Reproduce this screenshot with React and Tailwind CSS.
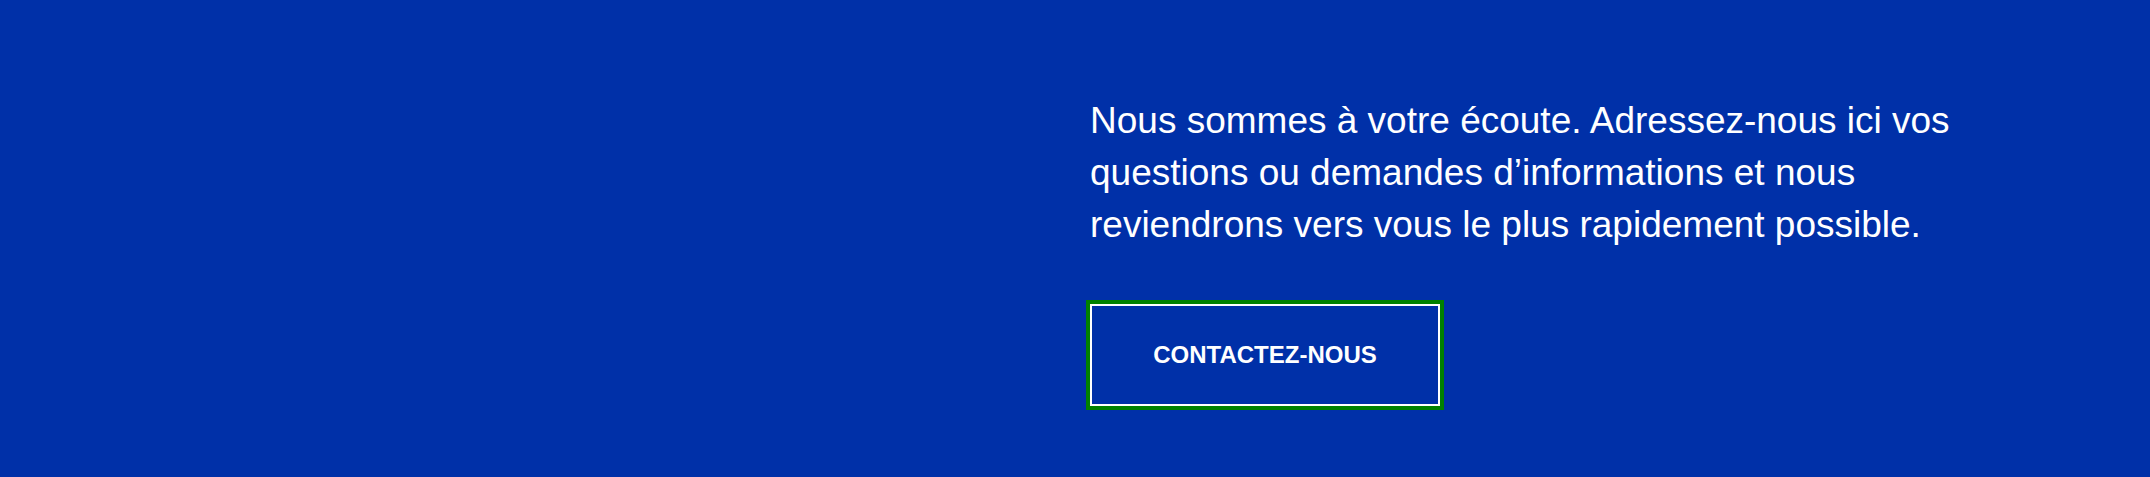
import React from "react";

export default function App() {
  return (
    <section className="grid h-[477px] w-full grid-cols-2 bg-[#0030a8] font-['Liberation_Sans',Arial,sans-serif] text-white">
      <div />
      <div className="flex flex-col items-start pl-[15px] pt-[95px]">
        <p className="max-w-[900px] text-[37px] leading-[52px] font-normal">
          Nous sommes à votre écoute. Adressez-nous ici vos questions ou demandes d’informations et nous reviendrons vers vous le plus rapidement possible.
        </p>
        <button
          type="button"
          className="mt-[53px] flex h-[102px] w-[350px] items-center justify-center border-2 border-white bg-transparent text-[24px] leading-none font-bold uppercase text-white outline-4 outline-[#008000]"
        >
          Contactez-nous
        </button>
      </div>
    </section>
  );
}
